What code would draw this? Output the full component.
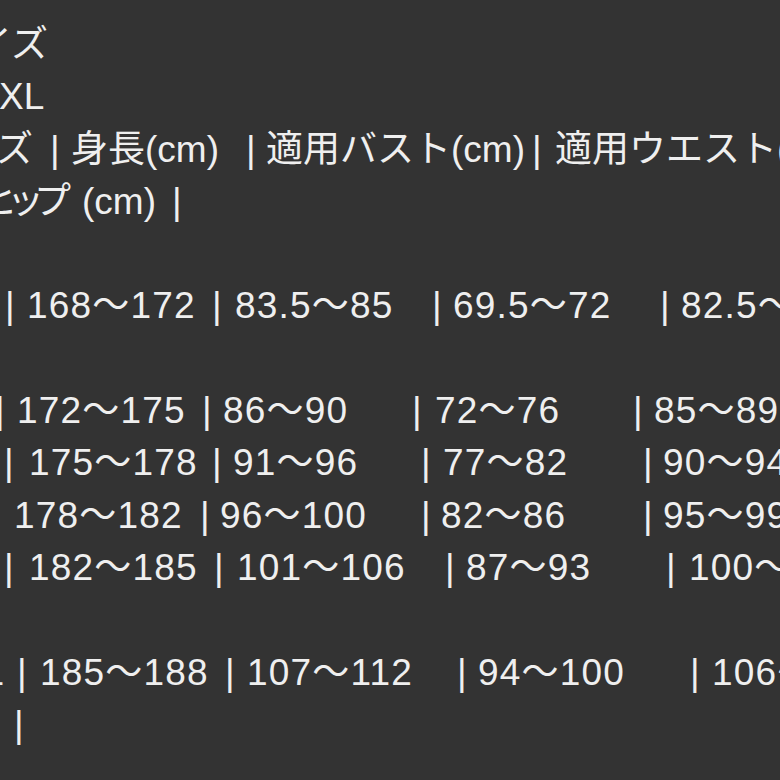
import React from "react";

type Seg = [number, string];

const rows: Seg[][] = [
  [[-62, "サイズ"]],
  [[-1, "XL"]],
  [
    [-77, "サイズ"],
    [50, "|"],
    [71, "身長(cm)"],
    [246, "|"],
    [266, "適用バスト(cm)"],
    [532, "|"],
    [555, "適用ウエスト(cm)"],
  ],
  [
    [-20, "ヒップ"],
    [82, "(cm)"],
    [172, "|"],
  ],
  [],
  [
    [5, "|"],
    [27, "168〜172"],
    [212, "|"],
    [235, "83.5〜85"],
    [432, "|"],
    [453, "69.5〜72"],
    [660, "|"],
    [681, "82.5〜85"],
  ],
  [],
  [
    [-5, "|"],
    [17, "172〜175"],
    [202, "|"],
    [223, "86〜90"],
    [412, "|"],
    [435, "72〜76"],
    [633, "|"],
    [654, "85〜89"],
  ],
  [
    [4, "|"],
    [29, "175〜178"],
    [212, "|"],
    [233, "91〜96"],
    [421, "|"],
    [443, "77〜82"],
    [643, "|"],
    [663, "90〜94"],
  ],
  [
    [14, "178〜182"],
    [200, "|"],
    [220, "96〜100"],
    [421, "|"],
    [441, "82〜86"],
    [643, "|"],
    [663, "95〜99"],
  ],
  [
    [4, "|"],
    [29, "182〜185"],
    [214, "|"],
    [237, "101〜106"],
    [445, "|"],
    [466, "87〜93"],
    [666, "|"],
    [689, "100〜104"],
  ],
  [],
  [
    [-17, "L"],
    [17, "|"],
    [40, "185〜188"],
    [225, "|"],
    [247, "107〜112"],
    [457, "|"],
    [478, "94〜100"],
    [690, "|"],
    [712, "106〜112"],
  ],
  [[14, "|"]],
];

function Row({ segs, kind }: { segs: Seg[]; kind: "num" | "kana" | "plain" }) {
  const cls =
    kind === "num"
      ? "flex h-[52.3px] items-center whitespace-nowrap leading-[52.3px] tracking-[1.2px]"
      : "flex h-[52.3px] items-center whitespace-nowrap leading-[52.3px]";
  return (
    <div className={cls}>
      {segs.map(([x, t], i) => {
        const next = segs[i + 1];
        const style: React.CSSProperties = {};
        if (i === 0) style.marginLeft = x;
        if (next) style.width = next[0] - x;
        return (
          <span
            key={i}
            className={
              kind === "kana" && i === 0
                ? "inline-block shrink-0 tracking-[-10px]"
                : "inline-block shrink-0"
            }
            style={style}
          >
            {t}
          </span>
        );
      })}
    </div>
  );
}

export default function App() {
  return (
    <div className="h-[780px] w-[780px] overflow-hidden bg-[#333333] pt-[19px] font-['Liberation_Sans','Noto_Sans_CJK_JP',sans-serif] text-[37px] text-[#efefef]">
      {rows.map((r, i) => (
        <Row key={i} segs={r} kind={i >= 5 ? "num" : i === 3 ? "kana" : "plain"} />
      ))}
    </div>
  );
}
